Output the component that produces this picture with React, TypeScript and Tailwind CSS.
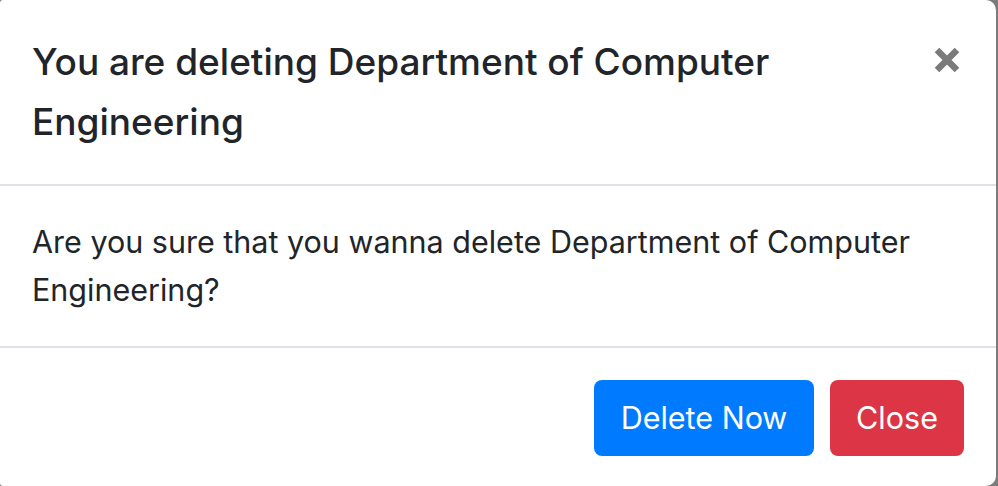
export default function App() {
  return (
    <div className="flex h-[486px] w-[998px] overflow-hidden bg-[#7b7b7b] font-['Inter','Liberation_Sans',sans-serif] text-[#212529]">
      <div className="flex h-[486px] w-[996px] flex-col rounded-tl-[3px] rounded-bl-[3px] rounded-tr-[10px] rounded-br-[10px] bg-white">
        <div className="flex items-start justify-between border-b-2 border-[#dee2e6] p-8">
          <h5 className="w-[860px] text-[37px] font-medium leading-[60px]">
            You are deleting Department of Computer Engineering
          </h5>
          <button className="mr-[2px] mt-[13px] flex h-[30px] w-[30px] items-center justify-center">
            <svg width="26" height="26" viewBox="0 0 26 26">
              <path d="M3 3 L23 23 M23 3 L3 23" stroke="#7b7b7b" strokeWidth="6.5" strokeLinecap="butt" />
            </svg>
          </button>
        </div>
        <div className="border-b-2 border-[#dee2e6] p-8">
          <p className="text-[30.5px] leading-[48px]">
            Are you sure that you wanna delete Department of Computer Engineering?
          </p>
        </div>
        <div className="flex items-center justify-end gap-4 px-8 pt-8">
          <button className="h-[76px] w-[220px] rounded-[8px] bg-[#007bff] text-[30.5px] text-white">
            Delete Now
          </button>
          <button className="h-[76px] w-[134px] rounded-[8px] bg-[#dc3545] text-[30.5px] text-white">
            Close
          </button>
        </div>
      </div>
    </div>
  );
}
